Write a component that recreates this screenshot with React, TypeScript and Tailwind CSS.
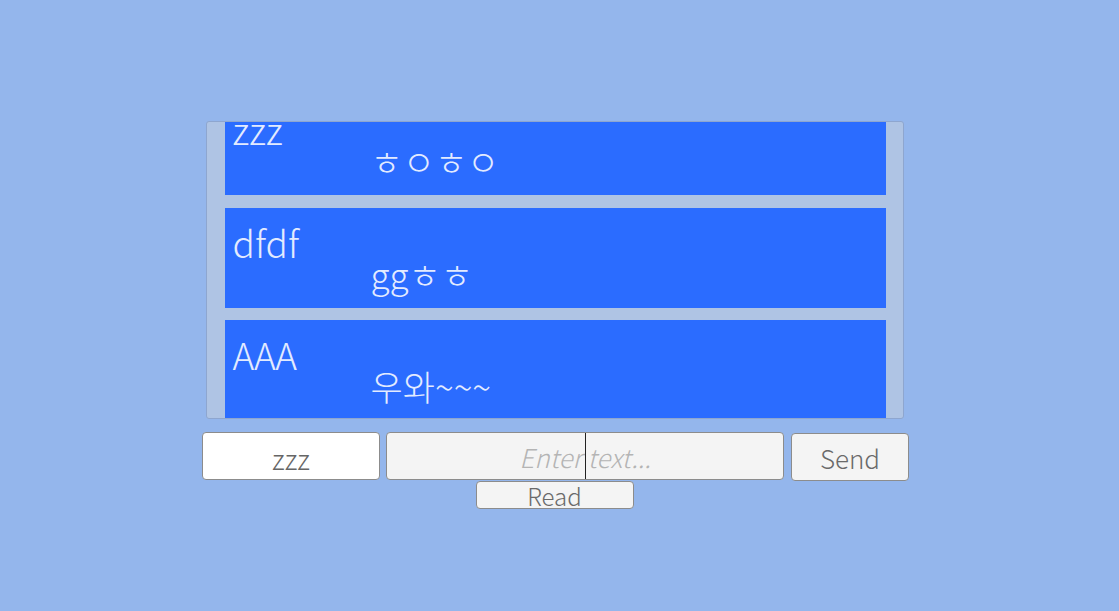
import React from 'react';

interface Message {
    name: string;
    text: string;
}

const messages: Message[] = [
    { name: 'zzz', text: 'ㅎㅇㅎㅇ' },
    { name: 'dfdf', text: 'ggㅎㅎ' },
    { name: 'AAA', text: '우와~~~' },
];

const font = { fontFamily: '"Noto Sans CJK KR", "Source Sans Pro", "Open Sans", sans-serif' };

function MessageRow({ message, index }: { message: Message; index: number }) {
    return (
        <div
            className={`${index === 0 ? '-mt-[27px] mb-[13px]' : 'mb-[12px]'} h-[100px] shrink-0 bg-[#2b6cff] px-2 font-extralight text-[#e3ebff]`}
        >
            <div className="pt-[8px] text-[37px] leading-[52px]">{message.name}</div>
            <div className="-mt-[18px] ml-[138px] text-[35px] leading-[48px]">{message.text}</div>
        </div>
    );
}

export default function App() {
    return (
        <div className="min-h-[611px] w-full bg-[#94b6ec]" style={font}>
            <div className="flex flex-col items-center pt-[121px] pr-[10px]">
                {/* Chat log */}
                <div className="h-[298px] w-[698px] overflow-hidden rounded-[3px] border border-[#8ea6cf] bg-[#afc4e4] pl-[18px] pr-[17px]">
                    <div className="flex flex-col">
                        {messages.map((m, i) => (
                            <MessageRow key={m.name} message={m} index={i} />
                        ))}
                    </div>
                </div>

                {/* Input row */}
                <div className="mt-[13px] flex items-start pl-[2px]">
                    <input
                        readOnly
                        value="zzz"
                        className="h-[48px] w-[178px] rounded-[4px] border border-[#8c8c8c] bg-white pt-[4px] text-center text-[28px] font-extralight text-[#666] outline-none"
                    />
                    <div className="relative ml-[6px] h-[48px] w-[398px]">
                        <input
                            readOnly
                            placeholder="Enter text..."
                            className="h-full w-full rounded-[4px] border border-[#8c8c8c] bg-[#f4f4f4] text-center text-[26px] font-extralight italic text-[#666] outline-none placeholder:text-[#b4b4b4]"
                        />
                        <span className="absolute left-[199px] top-[1px] h-[46px] w-px bg-[#222]" />
                    </div>
                    <button className="ml-[7px] mt-[1px] h-[48px] w-[118px] rounded-[4px] border border-[#8c8c8c] bg-[#f4f4f4] text-[26px] font-extralight text-[#6a6a6a]">
                        Send
                    </button>
                </div>
                <button className="h-[28px] w-[158px] rounded-[4px] border border-[#8c8c8c] bg-[#f4f4f4] pt-[2px] text-[24px] leading-[24px] font-extralight text-[#6a6a6a]">
                    Read
                </button>
            </div>
        </div>
    );
}
